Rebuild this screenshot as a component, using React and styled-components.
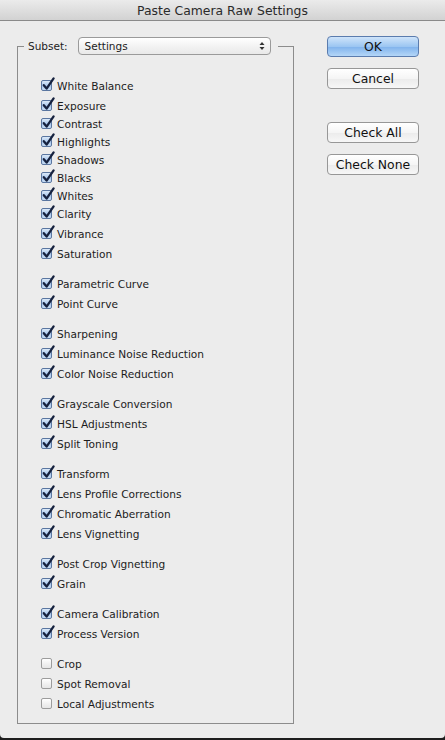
import React from "react";
import styled, { createGlobalStyle } from "styled-components";

const GlobalStyle = createGlobalStyle`
  html, body {
    margin: 0;
    padding: 0;
    background: #1e1e1e;
  }
  body {
    font-family: "DejaVu Sans", "Liberation Sans", sans-serif;
    color: #1c1c1c;
  }
`;

const Window = styled.div`
  width: 445px;
  height: 738px;
  background: #ececec;
  border-radius: 0 0 4px 4px;
  display: flex;
  flex-direction: column;
  overflow: hidden;
`;

const TitleBar = styled.div`
  flex: none;
  height: 20px;
  border-bottom: 1px solid #8a8a8a;
  background: linear-gradient(#ebebeb, #d2d2d2);
  display: flex;
  align-items: center;
  justify-content: center;
  font-size: 12.4px;
  color: #2a2a2a;
`;

const Body = styled.div`
  display: flex;
  align-items: flex-start;
  padding: 15px 0 0 17px;
`;

const GroupBox = styled.fieldset`
  width: 277px;
  box-sizing: border-box;
  margin: 1px 0 0 0;
  padding: 22px 0 8px 0;
  border: 1px solid #8c8c8c;
  min-width: 0;
`;

const Legend = styled.legend`
  margin-left: 6px;
  padding: 0 7px 0 4px;
  display: flex;
  align-items: center;
  gap: 10px;
  font-size: 10.5px;
`;

const SelectBox = styled.div`
  width: 193px;
  height: 18px;
  box-sizing: border-box;
  border: 1px solid #9a9a9a;
  border-radius: 4px;
  background: linear-gradient(#ffffff, #f2f2f2 55%, #e9e9e9);
  display: flex;
  align-items: center;
  justify-content: space-between;
  padding: 0 5px 0 6px;
  font-size: 10.5px;
`;

const List = styled.div`
  display: flex;
  flex-direction: column;
  gap: 10px;
  padding-left: 23px;
`;

const Group = styled.div`
  display: flex;
  flex-direction: column;
`;

const Row = styled.label`
  display: flex;
  align-items: flex-start;
  gap: 5px;
  height: ${(p) => (p.$tight ? 18 : 20)}px;
  line-height: 18px;
  font-size: 10.6px;
  white-space: nowrap;
`;

const Box = styled.span`
  position: relative;
  flex: none;
  width: 11px;
  height: 11px;
  margin-top: 3px;
  box-sizing: border-box;
  border-radius: 2px;
  border: 1px solid ${(p) => (p.$on ? "#5a76a0" : "#9c9c9c")};
  background: ${(p) =>
    p.$on
      ? "linear-gradient(#dbe9f8, #a9c8ee 55%, #c7dcf4)"
      : "linear-gradient(#ffffff, #f0f0f0 55%, #e6e6e6)"};
`;

const Tick = styled.svg`
  position: absolute;
  left: 0px;
  top: -4px;
  width: 13px;
  height: 14px;
  overflow: visible;
`;

const Buttons = styled.div`
  display: flex;
  flex-direction: column;
  margin-left: 33px;
`;

const Button = styled.button`
  width: 92px;
  height: 21px;
  margin: ${(p) => p.$top || 0}px 0 0 0;
  padding: 0;
  box-sizing: border-box;
  border-radius: 4px;
  border: 1px solid ${(p) => (p.$default ? "#5b7cae" : "#979797")};
  background: ${(p) =>
    p.$default
      ? "linear-gradient(#cfe4fa, #9cc6f2 50%, #7fb2ec 51%, #b4d6f7)"
      : "linear-gradient(#ffffff, #f5f5f5 50%, #ebebeb 51%, #f7f7f7)"};
  font-family: "DejaVu Sans", "Liberation Sans", sans-serif;
  font-size: 12.4px;
  color: #111;
  display: flex;
  align-items: center;
  justify-content: center;
`;

const groups = [
  [
    ["White Balance", true, false],
    ["Exposure", true, true],
    ["Contrast", true, true],
    ["Highlights", true, true],
    ["Shadows", true, true],
    ["Blacks", true, true],
    ["Whites", true, true],
    ["Clarity", true, false],
    ["Vibrance", true, false],
    ["Saturation", true, false],
  ],
  [
    ["Parametric Curve", true],
    ["Point Curve", true],
  ],
  [
    ["Sharpening", true],
    ["Luminance Noise Reduction", true],
    ["Color Noise Reduction", true],
  ],
  [
    ["Grayscale Conversion", true],
    ["HSL Adjustments", true],
    ["Split Toning", true],
  ],
  [
    ["Transform", true],
    ["Lens Profile Corrections", true],
    ["Chromatic Aberration", true],
    ["Lens Vignetting", true],
  ],
  [
    ["Post Crop Vignetting", true],
    ["Grain", true],
  ],
  [
    ["Camera Calibration", true],
    ["Process Version", true],
  ],
  [
    ["Crop", false],
    ["Spot Removal", false],
    ["Local Adjustments", false],
  ],
];

const Check = ({ on }) => (
  <Box $on={on}>
    {on && (
      <Tick viewBox="0 0 13 14">
        <path
          d="M1.8 8.2 L4.6 11.6 L11.6 1.4"
          stroke="#16223f"
          strokeWidth="2.3"
          fill="none"
          strokeLinecap="round"
          strokeLinejoin="round"
        />
      </Tick>
    )}
  </Box>
);

const Stepper = () => (
  <svg width="6" height="10" viewBox="0 0 6 10">
    <path d="M3 1 L5.5 4 H0.5 Z" fill="#333" />
    <path d="M3 9 L5.5 6 H0.5 Z" fill="#333" />
  </svg>
);

export default function App() {
  return (
    <>
      <GlobalStyle />
      <Window>
        <TitleBar>Paste Camera Raw Settings</TitleBar>
        <Body>
          <GroupBox>
            <Legend>
              <span>Subset:</span>
              <SelectBox>
                <span>Settings</span>
                <Stepper />
              </SelectBox>
            </Legend>
            <List>
              {groups.map((g, i) => (
                <Group key={i}>
                  {g.map(([name, on, tight]) => (
                    <Row key={name} $tight={tight}>
                      <Check on={on} />
                      {name}
                    </Row>
                  ))}
                </Group>
              ))}
            </List>
          </GroupBox>
          <Buttons>
            <Button $default $top={0}>OK</Button>
            <Button $top={11}>Cancel</Button>
            <Button $top={33}>Check All</Button>
            <Button $top={11}>Check None</Button>
          </Buttons>
        </Body>
      </Window>
    </>
  );
}
